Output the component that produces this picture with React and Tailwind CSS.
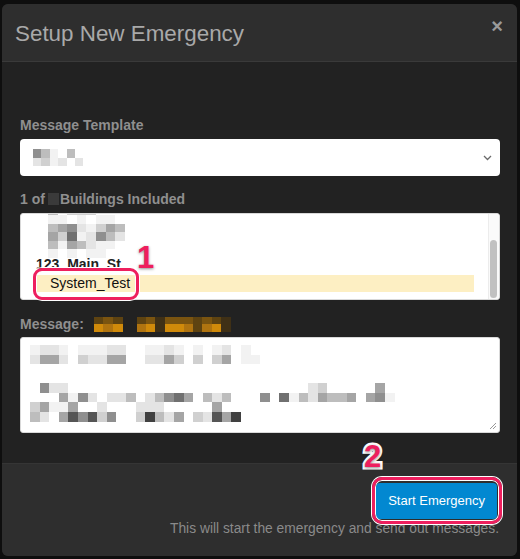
import React from "react";

// shade codes for the blurred (pixelated) bits of the screenshot
const SHADES = {
  ".": "bg-transparent",
  "1": "bg-[#f2f2f2]",
  "2": "bg-[#e4e4e4]",
  "3": "bg-[#d0d0d0]",
  "4": "bg-[#bdbdbd]",
  "5": "bg-[#a5a5a5]",
  "6": "bg-[#8f8f8f]",
  "7": "bg-[#707070]",
  "8": "bg-[#555555]",
  "9": "bg-[#404040]",
  a: "bg-[#3f3016]",
  b: "bg-[#5e4311]",
  c: "bg-[#7a5410]",
  d: "bg-[#b07410]",
  e: "bg-[#d08a0a]",
};

const SELECT_ROWS = ["641.4.", "2312.2"];
const LIST_ROWS = ["4.333", "11.1.11.", "45621354", "53712642", "4154211.", "1.1.11.."];
const MSG_LINE_1 = ["1221.11122..1121.1.12.1.", "2552.32255..2253.3.35.11"];
const MSG_LINE_2 = [
  ".622.........................23.....5.",
  "...5162.224.24675.424...6.71425445.561",
  "35115..2...222.....5",
  "42.586836..39425.32859",
];

function Mosaic({ rows, cell }) {
  return (
    <div className="flex flex-col">
      {rows.map((row, i) => (
        <div key={i} className="flex">
          {[...row].map((c, j) => (
            <span key={j} className={`${cell} shrink-0 ${SHADES[c]}`} />
          ))}
        </div>
      ))}
    </div>
  );
}

function Marker({ children, className }) {
  return (
    <span
      className={`absolute font-bold text-[31px] leading-none text-[#ee1f5e] [-webkit-text-stroke:5px_white] [paint-order:stroke_fill] [text-shadow:0_1px_3px_rgba(0,0,0,0.45)] ${className}`}
    >
      {children}
    </span>
  );
}

export default function App() {
  return (
    <div className="w-[520px] h-[559px] bg-[#0e0e0e] pt-[4px] pl-[2px] pr-[3px] font-['Liberation_Sans',Arial,sans-serif]">
      <div className="h-[552px] rounded-[6px] bg-[#222222] overflow-hidden flex flex-col">
        {/* header */}
        <div className="h-[58px] shrink-0 bg-[#2e2e2e] border-b border-[#3a3a3a] flex justify-between pl-[13px] pr-[14px]">
          <span className="self-center mt-[3px] text-[22.4px] text-[#a9a9a9]">Setup New Emergency</span>
          <span className="mt-[12px] text-[20px] leading-none font-bold text-[#9a9a9a]">×</span>
        </div>

        {/* body */}
        <div className="flex-1 pt-[53px] pl-[18px] pr-[17px]">
          <div className="text-[14px] leading-[20px] font-bold text-[#8f8f8f] mb-[4px]">Message Template</div>
          <div className="h-[37px] bg-white rounded-[4px] flex items-center justify-between pl-[13px] pr-[8px]">
            <Mosaic rows={SELECT_ROWS} cell="w-[8.4px] h-[8.5px]" />
            <svg width="9" height="6" viewBox="0 0 9 6" className="mt-[1px]">
              <polyline points="1,1 4.5,4.5 8,1" fill="none" stroke="#6a6a6a" strokeWidth="1.3" />
            </svg>
          </div>

          <div className="mt-[13px] mb-[4px] text-[14px] leading-[20px] font-bold text-[#8f8f8f] flex items-center">
            <span>1 of</span>
            <span className="inline-block w-[11px] h-[12px] bg-[#3a3a3a] ml-[3px] mr-[1px]" />
            <span>Buildings Included</span>
          </div>
          <div className="relative">
            <div className="h-[87px] bg-white rounded-[3px] border border-[#d9d9d9] flex overflow-hidden">
              <div className="flex-1 pl-[15px] pr-[14px] overflow-hidden">
                <div className="-mt-[7.5px] ml-[12px]">
                  <Mosaic rows={LIST_ROWS} cell="w-[9.6px] h-[8.5px]" />
                </div>
                <div className="-mt-[1.5px] text-[14px] leading-[16px] font-bold text-[#222]">123_Main_St</div>
                <div className="mt-[3px] h-[17px] bg-[#fdefc3] pl-[14px] text-[14px] leading-[17px] text-[#111]">System_Test</div>
              </div>
              <div className="w-[11px] shrink-0 bg-[#fafafa] border-l border-[#ececec] pt-[26px] pl-[1px]">
                <div className="w-[7px] h-[58px] rounded-full bg-[#c1c1c1]" />
              </div>
            </div>
            <span className="absolute left-[13px] top-[55px] w-[106px] h-[32px] rounded-[9px] border-[3px] border-[#ee1f5e] shadow-[0_0_0_1px_#fff,inset_0_0_0_1px_#fff]" />
            <Marker className="left-[117px] top-[29px]">1</Marker>
          </div>

          <div className="mt-[14px] mb-[3px] h-[20px] flex items-center text-[14px] font-bold text-[#8f8f8f]">
            <span>Message:</span>
            <div className="ml-[10px]">
              <Mosaic rows={["bcb", "ede"]} cell="w-[9.6px] h-[7.5px]" />
            </div>
            <div className="ml-[14px]">
              <Mosaic rows={["bcacccbcba", "deaeedbdea"]} cell="w-[9.4px] h-[7.5px]" />
            </div>
          </div>
          <div className="relative h-[96px] bg-white rounded-[3px] border border-[#d9d9d9] pt-[7px] pl-[9px]">
            <Mosaic rows={MSG_LINE_1} cell="w-[9.6px] h-[9.6px]" />
            <div className="mt-[19px]">
              <Mosaic rows={MSG_LINE_2} cell="w-[9.6px] h-[9.6px]" />
            </div>
            <svg width="8" height="8" viewBox="0 0 8 8" className="absolute right-[2px] bottom-[2px]">
              <line x1="1" y1="7" x2="7" y2="1" stroke="#999" strokeWidth="1" />
              <line x1="4" y1="7" x2="7" y2="4" stroke="#999" strokeWidth="1" />
            </svg>
          </div>
        </div>

        {/* footer */}
        <div className="relative h-[93px] shrink-0 bg-[#2e2e2e] border-t border-[#353535] flex flex-col items-end pt-[19px]">
          <div className="relative mr-[20px]">
            <button className="h-[36px] px-[12px] rounded-[4px] bg-[#0288d1] text-white text-[13px]">Start Emergency</button>
            <span className="absolute -left-[4px] -right-[5px] -top-[6px] -bottom-[5px] rounded-[10px] border-[3px] border-[#ee1f5e] shadow-[0_0_0_1px_#fff,inset_0_0_0_1px_#fff]" />
          </div>
          <div className="mt-[2px] mr-[18px] text-[13.8px] leading-[16px] text-[#8a8a8a]">
            This will start the emergency and send out messages.
          </div>
          <Marker className="left-[362px] top-[-23px]">2</Marker>
        </div>
      </div>
    </div>
  );
}
